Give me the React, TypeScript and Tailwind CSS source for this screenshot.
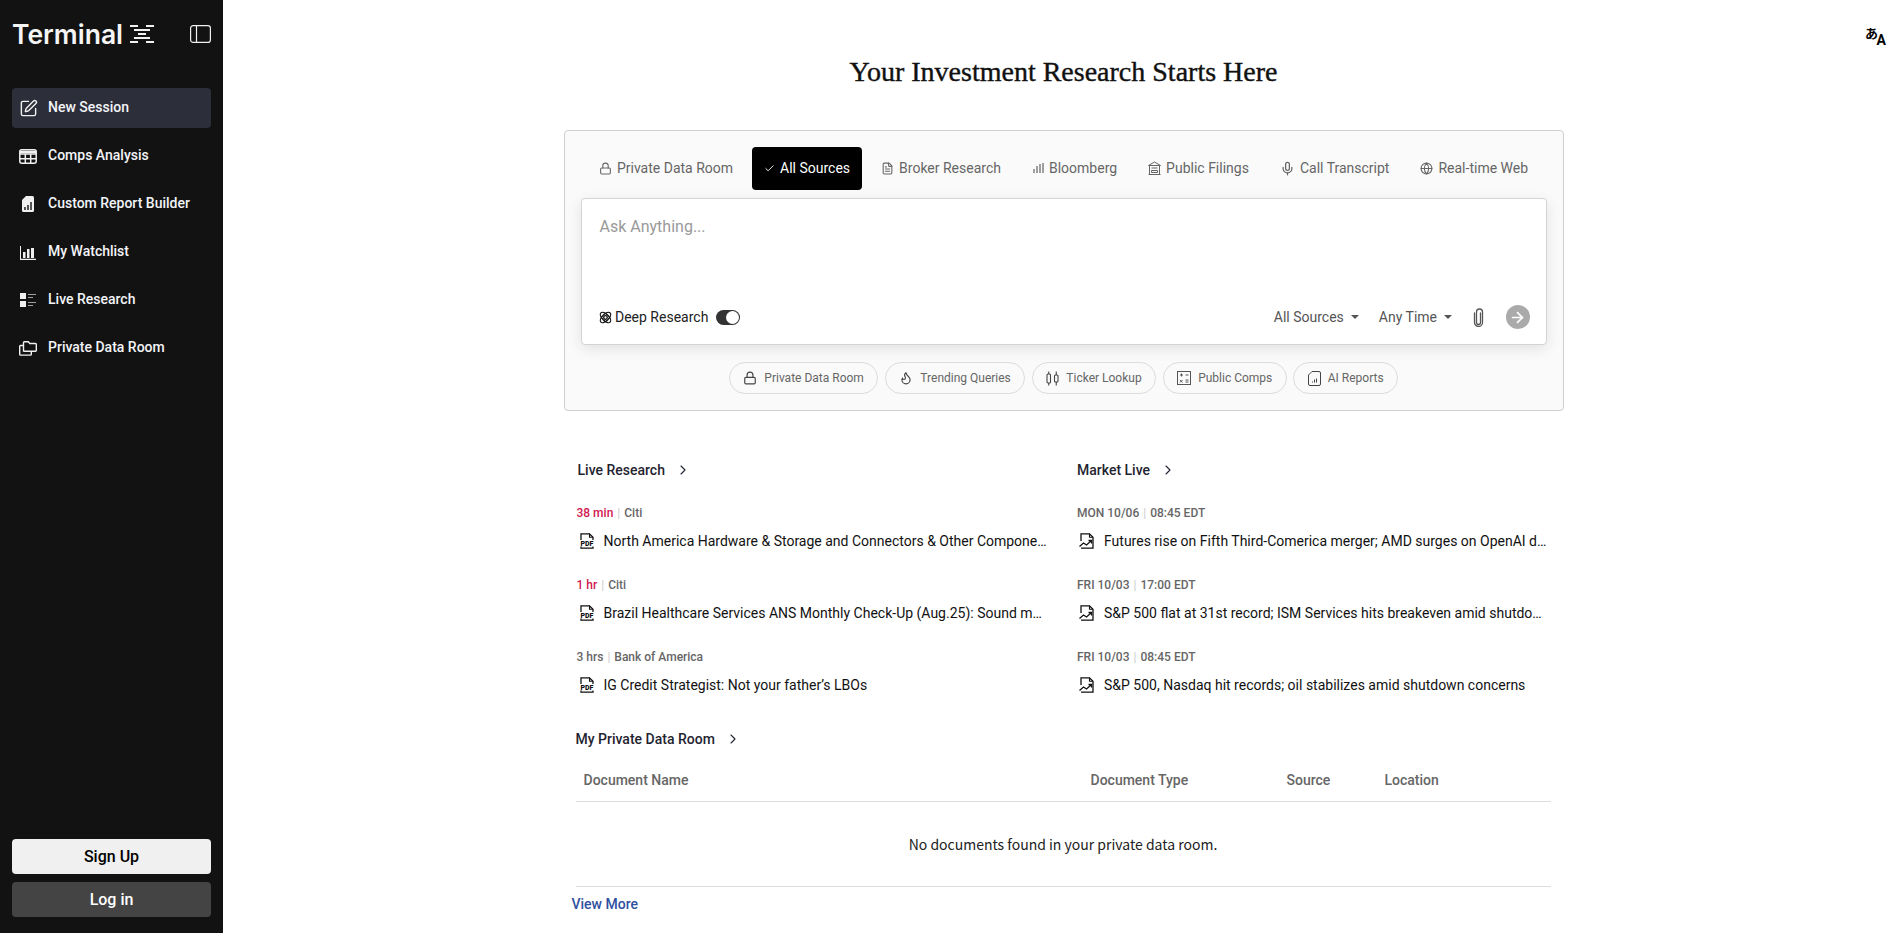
import { ChevronRight, FileText, Globe, Lock, Mic, Check, ArrowRight, Flame, SquarePen } from "lucide-react";
import type { ReactNode } from "react";

const sans = "font-['Roboto','Liberation_Sans',sans-serif]";

function Logo() {
  return (
    <svg width="24" height="18" viewBox="0 0 24 18" fill="#f0f0f0">
      <rect x="0" y="0" width="8" height="2" />
      <rect x="16" y="0" width="8" height="2" />
      <rect x="4" y="4" width="16" height="2" />
      <rect x="8" y="8" width="8" height="2" />
      <rect x="4" y="12" width="16" height="2" />
      <rect x="0" y="16" width="8" height="2" />
      <rect x="16" y="16" width="8" height="2" />
    </svg>
  );
}

function PanelIcon() {
  return (
    <svg width="21" height="18" viewBox="0 0 21 18" fill="none" stroke="#f0f0f0" strokeWidth="1.2">
      <rect x="0.6" y="0.6" width="19.8" height="16.8" rx="2.500" />
      <path d="M6.500 .6v16.800" />
    </svg>
  );
}

function CompsIcon() {
  return (
    <svg width="18" height="15" viewBox="0 0 18 15" fill="none" stroke="#f0f0f0" strokeWidth="1.500">
      <rect x="0.800" y="0.800" width="16.400" height="13.400" rx="2" />
      <path d="M.8 5h16.400M.8 9.700h16.400M6.300 5v9M11.700 5v9" />
      <path d="M.8 3h16.400" strokeWidth="2.500" />
    </svg>
  );
}

function ReportIcon() {
  return (
    <svg width="12" height="16" viewBox="0 0 12 16" fill="#f0f0f0">
      <path d="M4 0h6.500A1.500 1.500 0 0 1 12 1.500v13a1.500 1.500 0 0 1-1.500 1.500h-9A1.500 1.500 0 0 1 0 14.500V4z" />
      <path d="M3 14v-3M6 14V9M9 14V6" stroke="#121212" strokeWidth="1.400" />
    </svg>
  );
}

function WatchIcon() {
  return (
    <svg width="16" height="15" viewBox="0 0 16 15" fill="#f0f0f0">
      <path d="M0 1h1v12.800h15V15H0z" />
      <rect x="3" y="7" width="2.500" height="6" />
      <rect x="7" y="4" width="2.500" height="9" />
      <rect x="11" y="3" width="3" height="10" />
    </svg>
  );
}

function LiveIcon() {
  return (
    <svg width="16" height="14" viewBox="0 0 16 14" fill="#f0f0f0">
      <rect x="0" y="0" width="6" height="6" />
      <rect x="0" y="8" width="6" height="6" />
      <path d="M8 1h8v1H8zM8 4h5v1H8zM8 9h8v1H8zM8 12h5v1H8z" fill="#a0a0a0" />
    </svg>
  );
}

function RoomIcon() {
  return (
    <svg width="18" height="15" viewBox="0 0 18 15" fill="none" stroke="#f0f0f0" strokeWidth="1.400">
      <path d="M4.500 10.500V1.500a.8.8 0 0 1 .8-.8h4l1.500 1.800h5.700a.8.8 0 0 1 .8.8v6.100a.8.8 0 0 1-.8.8H5.300a.8.8 0 0 1-.8-.8z" />
      <path d="M4.500 4.500H1.500a.8.8 0 0 0-.8.8v8a.8.8 0 0 0 .8.8h10a.8.8 0 0 0 .8-.8v-2.500" />
    </svg>
  );
}

function BarsSmall() {
  return (
    <svg width="12" height="12" viewBox="0 0 12 12" fill="none" stroke="#555" strokeWidth="1.100">
      <path d="M2 11V7M5 11V4M8 11V2M11 11V1" />
    </svg>
  );
}

function BankIcon() {
  return (
    <svg width="13" height="14" viewBox="0 0 13 14" fill="none" stroke="#666" strokeWidth="1">
      <path d="M.5 4.500 6.500 1l6 3.500zM1.500 4.500v9h10v-9M.5 13.500h12" />
      <path d="M3.500 7h6M3.500 9.500h6v2h-6z" />
    </svg>
  );
}

function AtomIcon() {
  return (
    <svg width="13" height="13" viewBox="0 0 13 13" fill="none" stroke="#111" strokeWidth="1.300" className="-ml-px">
      <ellipse cx="6.500" cy="6.500" rx="6.500" ry="3.300" transform="rotate(45 6.500 6.500)" />
      <ellipse cx="6.500" cy="6.500" rx="6.500" ry="3.300" transform="rotate(-45 6.500 6.500)" />
      <circle cx="6.500" cy="6.500" r="1.800" />
    </svg>
  );
}

function ClipIcon() {
  return (
    <svg width="11" height="19" viewBox="0 0 11 19" fill="none" stroke="#555" strokeWidth="1.300" strokeLinecap="round">
      <path d="M7.500 5v9.500a2 2 0 0 1-4 0V4a3 3 0 0 1 6 0v10.500a4 4 0 0 1-8 0V5" />
    </svg>
  );
}

function PdfIcon() {
  return (
    <svg width="16" height="16" viewBox="0 0 16 16" fill="none" className="shrink-0">
      <path d="M2 7V.8h8.500L14 4.300V7M2 13.500v1.700h12v-1.700" stroke="#111" strokeWidth="1.300" />
      <path d="M10.500 .8v3.500H14" stroke="#111" strokeWidth="1.100" />
      <text x="8" y="12.800" textAnchor="middle" fontSize="7" fontWeight="900" fill="#111" fontFamily="Roboto, sans-serif">PDF</text>
    </svg>
  );
}

function ChartDocIcon() {
  return (
    <svg width="16" height="16" viewBox="0 0 16 16" fill="none" className="shrink-0" stroke="#111">
      <path d="M2 8V.8h8.500L14 4.300V15.200H2" strokeWidth="1.300" />
      <path d="M10.500 .8v3.500H14" strokeWidth="1.100" />
      <path d="M0.500 13.500l4-3.500 3 2 5-4.500M9.500 7.500h3v3" strokeWidth="1.300" />
    </svg>
  );
}

function CandleIcon() {
  return (
    <svg width="13" height="15" viewBox="0 0 13 15" fill="none" stroke="#444" strokeWidth="1.100">
      <rect x="1" y="3" width="3.500" height="9" rx="1" />
      <rect x="8.500" y="4" width="3.500" height="7" rx="1" />
      <path d="M2.750 .5V3M2.750 12v2.500M10.250 .5V4M10.250 11v3.500" />
    </svg>
  );
}

function CompsChipIcon() {
  return (
    <svg width="14" height="14" viewBox="0 0 14 14" fill="none" stroke="#555" strokeWidth="1">
      <rect x="0.500" y="0.500" width="13" height="13" />
      <path d="M3 4h3M4.500 2.500v3M8.500 4h3M3 9l2.500 2.500M5.500 9 3 11.500M8.500 9h3M8.500 11h3" />
    </svg>
  );
}

function ChipReport() {
  return (
    <svg width="13" height="15" viewBox="0 0 13 15" fill="none" stroke="#444" strokeWidth="1">
      <path d="M4 .5h7A1.500 1.500 0 0 1 12.500 2v11a1.500 1.500 0 0 1-1.500 1.500H2A1.500 1.500 0 0 1 .5 13V4z" />
      <path d="M4.500 11.500v-1M6.500 11.500v-3M8.500 11.500v-4" />
    </svg>
  );
}

function NavItem({ icon, label, active }: { icon: ReactNode; label: string; active?: boolean }) {
  return (
    <div className={`flex h-10 items-center rounded pl-[2px] ${active ? "bg-[#2c2e3a]" : ""}`}>
      <span className="flex w-7 shrink-0 items-center justify-center text-[#f0f0f0]">{icon}</span>
      <span className="ml-[6px] pb-[2px] text-sm font-medium text-[#f3f4f8]">{label}</span>
    </div>
  );
}

function SourceTab({ icon, label, active }: { icon: ReactNode; label: string; active?: boolean }) {
  return (
    <div className={`flex h-[43px] items-center gap-[5px] rounded px-3 pb-px text-sm ${active ? "bg-black text-white" : "text-[#666]"}`}>
      {icon}
      {label}
    </div>
  );
}

function Chip({ icon, label }: { icon: ReactNode; label: string }) {
  return (
    <div className="flex h-8 items-center gap-[7px] rounded-full border border-[#dcdcdc] px-[13.5px] text-xs text-[#666]">
      {icon}
      {label}
    </div>
  );
}

function FeedItem({ icon, when, hot, source, title }: { icon: ReactNode; when: string; hot?: boolean; source: string; title: string }) {
  return (
    <div className="h-[72px]">
      <div className="flex h-[18px] items-center text-xs font-medium text-[#666]">
        <span className={hot ? "text-[#d0174f]" : ""}>{when}</span>
        <span className="mx-1 font-normal text-[#ccc]">|</span>
        <span>{source}</span>
      </div>
      <div className="mt-[9px] flex items-center gap-[9px] pl-[2px]">
        {icon}
        <span className="truncate text-sm text-[#111]">{title}</span>
      </div>
    </div>
  );
}

function SectionHead({ label }: { label: string }) {
  return (
    <div className="flex items-center gap-[10px] text-sm font-medium text-[#1f2430]">
      {label}
      <ChevronRight size={16} strokeWidth={1.600} />
    </div>
  );
}

export default function App() {
  return (
    <div className={`flex h-[933px] overflow-hidden bg-white ${sans}`}>
      <aside className="flex w-[223px] shrink-0 flex-col bg-[#121212] px-3 pb-4">
        <div className="flex h-[68px] items-center justify-between text-[#f5f5f5]">
          <div className="flex items-center gap-[7px]">
            <span className="font-['Inter',sans-serif] text-[26.5px] leading-none font-semibold">Terminal</span>
            <Logo />
          </div>
          <PanelIcon />
        </div>
        <nav className="mt-5 flex flex-col gap-2">
          <NavItem active icon={<SquarePen size={19} strokeWidth={1.800} />} label="New Session" />
          <NavItem icon={<CompsIcon />} label="Comps Analysis" />
          <NavItem icon={<ReportIcon />} label="Custom Report Builder" />
          <NavItem icon={<WatchIcon />} label="My Watchlist" />
          <NavItem icon={<LiveIcon />} label="Live Research" />
          <NavItem icon={<RoomIcon />} label="Private Data Room" />
        </nav>
        <div className="mt-auto flex flex-col gap-2">
          <button className="h-[35px] rounded bg-[#f0f0f0] text-base font-medium text-black">Sign Up</button>
          <button className="h-[35px] rounded bg-[#444444] text-base font-medium text-white">Log in</button>
        </div>
      </aside>

      <main className="relative flex-1">
        <div className="absolute top-[26px] right-[18px] h-[20px] w-[21px] font-bold text-black">
          <span className="absolute top-0 left-0 font-['Noto_Sans_CJK_JP',sans-serif] text-[13px] leading-[14px]">あ</span>
          <span className="absolute right-0 bottom-0 text-[14px] leading-[12px]">A</span>
        </div>
        <div className="mx-auto w-[1000px]">
          <h1 className="flex h-[130px] items-start justify-center pt-[54px] font-['Liberation_Serif',serif] text-[28px] leading-[36px] font-normal text-[#111] [-webkit-text-stroke:0.4px_#111]">
            Your Investment Research Starts Here
          </h1>
          <div className="h-[281px] rounded border border-[#cfcfcf] bg-[#fafafa] px-4 pt-4">
            <div className="flex justify-center gap-[7px]">
              <SourceTab icon={<Lock size={13} />} label="Private Data Room" />
              <SourceTab active icon={<Check size={11} />} label="All Sources" />
              <SourceTab icon={<FileText size={13} />} label="Broker Research" />
              <SourceTab icon={<BarsSmall />} label="Bloomberg" />
              <SourceTab icon={<BankIcon />} label="Public Filings" />
              <SourceTab icon={<Mic size={15} />} label="Call Transcript" />
              <SourceTab icon={<Globe size={13} />} label="Real-time Web" />
            </div>
            <div className="mt-2 flex h-[147px] flex-col justify-between rounded border border-[#d4d4d4] bg-white pt-[16px] pr-[16px] pb-[15px] pl-[18px] shadow-[0_4px_14px_rgba(0,0,0,0.1)]">
              <div className="text-base leading-[24px] text-[#999]">Ask Anything...</div>
              <div className="flex items-center justify-between">
                <div className="flex items-center gap-[3.5px] text-sm text-[#222]">
                  <AtomIcon />
                  Deep Research
                  <span className="ml-1 flex h-[15px] w-6 items-center justify-end rounded-full bg-[#333] px-px">
                    <span className="h-[13px] w-[13px] rounded-full bg-white" />
                  </span>
                </div>
                <div className="flex items-center text-sm text-[#555]">
                  <span>All Sources</span>
                  <span className="ml-[7px] h-0 w-0 border-x-4 border-t-4 border-x-transparent border-t-[#555]" />
                  <span className="ml-5">Any Time</span>
                  <span className="ml-[7px] h-0 w-0 border-x-4 border-t-4 border-x-transparent border-t-[#555]" />
                  <span className="ml-[21px]"><ClipIcon /></span>
                  <span className="ml-[21.5px] flex h-6 w-6 items-center justify-center rounded-full bg-[#aaa] text-white">
                    <ArrowRight size={17} strokeWidth={2.400} />
                  </span>
                </div>
              </div>
            </div>
            <div className="mt-[17px] flex justify-center gap-[6.5px]">
              <Chip icon={<Lock size={14} className="text-[#444]" />} label="Private Data Room" />
              <Chip icon={<Flame size={14} className="text-[#444]" />} label="Trending Queries" />
              <Chip icon={<CandleIcon />} label="Ticker Lookup" />
              <Chip icon={<CompsChipIcon />} label="Public Comps" />
              <Chip icon={<ChipReport />} label="AI Reports" />
            </div>
          </div>

          <div className="mt-[49px] grid grid-cols-2 gap-[27px] px-[13px]">
            <div className="min-w-0 pr-[3px]">
              <div className="ml-px"><SectionHead label="Live Research" /></div>
              <div className="mt-[24px]">
                <FeedItem icon={<PdfIcon />} hot when="38 min" source="Citi" title="North America Hardware & Storage and Connectors & Other Components: Q3 preview" />
                <FeedItem icon={<PdfIcon />} hot when="1 hr" source="Citi" title="Brazil Healthcare Services ANS Monthly Check-Up (Aug.25): Sound margin recovery" />
                <FeedItem icon={<PdfIcon />} when="3 hrs" source="Bank of America" title="IG Credit Strategist: Not your father’s LBOs" />
              </div>
            </div>
            <div className="min-w-0">
              <SectionHead label="Market Live" />
              <div className="mt-[24px]">
                <FeedItem icon={<ChartDocIcon />} when="MON 10/06" source="08:45 EDT" title="Futures rise on Fifth Third-Comerica merger; AMD surges on OpenAI deal and more" />
                <FeedItem icon={<ChartDocIcon />} when="FRI 10/03" source="17:00 EDT" title="S&P 500 flat at 31st record; ISM Services hits breakeven amid shutdown worries" />
                <FeedItem icon={<ChartDocIcon />} when="FRI 10/03" source="08:45 EDT" title="S&P 500, Nasdaq hit records; oil stabilizes amid shutdown concerns" />
              </div>
            </div>
          </div>

          <div className="mt-[9px] mr-[13px] ml-[12px]">
            <SectionHead label="My Private Data Room" />
            <div className="mt-[21px] flex h-[32px] items-start border-b border-[#ddd] pl-2 text-sm font-medium text-[#666]">
              <span className="w-[507px]">Document Name</span>
              <span className="w-[196px]">Document Type</span>
              <span className="w-[98px]">Source</span>
              <span>Location</span>
            </div>
            <div className="flex h-[85px] items-center justify-center border-b border-[#ddd] font-['Noto_Sans_CJK_SC',sans-serif] text-sm text-[#222]">
              No documents found in your private data room.
            </div>
            <div className="mt-[7px] -ml-1 text-sm font-medium text-[#2f4f9f]">View More</div>
          </div>
        </div>
      </main>
    </div>
  );
}
